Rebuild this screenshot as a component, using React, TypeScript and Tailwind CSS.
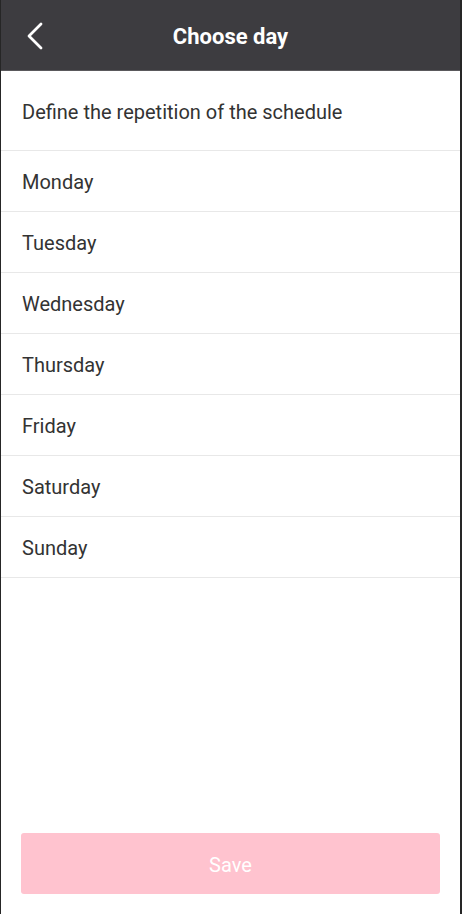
const days = ['Monday', 'Tuesday', 'Wednesday', 'Thursday', 'Friday', 'Saturday', 'Sunday'];

export default function App() {
  return (
    <div className="h-[914px] w-[462px] flex flex-col bg-white border-l border-r-2 border-[#262626] font-['Roboto',sans-serif]">
      <header className="relative h-[71px] shrink-0 flex items-center justify-center bg-[#3d3c40] border-b border-[#5a595c]">
        <button className="absolute left-[25px] top-[22px]">
          <svg width="18" height="28" viewBox="0 0 18 28" fill="none">
            <path d="M15 2 L3 14 L15 26" stroke="white" strokeWidth="2.8" strokeLinecap="round" strokeLinejoin="round" />
          </svg>
        </button>
        <h1 className="text-[22px] font-bold text-white pt-[2px]">Choose day</h1>
      </header>
      <div className="h-[80px] shrink-0 flex items-center px-[21px] border-b border-[#e8e8e8]">
        <span className="text-[20px] text-[#333] pt-[2px]">Define the repetition of the schedule</span>
      </div>
      <ul className="flex flex-col">
        {days.map((day) => (
          <li key={day} className="h-[61px] flex items-center px-[21px] border-b border-[#e8e8e8] text-[20px] text-[#333] pt-[2px]">
            {day}
          </li>
        ))}
      </ul>
      <div className="flex-1" />
      <div className="px-[20px] pb-[20px]">
        <button className="w-full h-[61px] rounded-[3px] bg-[#ffc3cf] text-white text-[20px] pt-[2px]">Save</button>
      </div>
    </div>
  );
}
